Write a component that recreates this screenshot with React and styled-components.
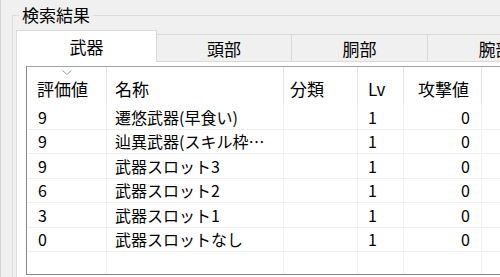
import React from "react";
import styled, { createGlobalStyle } from "styled-components";

const GlobalStyle = createGlobalStyle`
  html, body {
    margin: 0;
    padding: 0;
    background: #f0f0f0;
    overflow: hidden;
  }
  body {
    font-family: "Noto Sans CJK JP", "Noto Sans", sans-serif;
    font-size: 17px;
    color: #000;
  }
`;

const Window = styled.div`
  width: 500px;
  height: 277px;
  box-sizing: border-box;
  overflow: hidden;
  border-left: 1px solid #d2d2d2;
  padding: 4px 0 0 11px;
  background: #f0f0f0;
`;

const GroupBox = styled.fieldset`
  margin: 0;
  padding: 4px 0 0 3px;
  min-width: 0;
  width: 620px;
  border: 1px solid #dcdcdc;
`;

const GroupTitle = styled.legend`
  margin-left: 3px;
  padding: 0 3px;
  line-height: 22px;
  font-size: 17px;
`;

const TabStrip = styled.div`
  display: flex;
  align-items: flex-end;
  height: 31px;
`;

const Tab = styled.div`
  flex: none;
  display: flex;
  align-items: center;
  justify-content: center;
  box-sizing: border-box;
  width: ${p => p.$width}px;
  height: ${p => (p.$active ? 32 : 27)}px;
  border: 1px solid #d9d9d9;
  border-left: ${p => (p.$first ? "1px solid #d9d9d9" : "none")};
  border-bottom: none;
  background: ${p => (p.$active ? "#ffffff" : "#f0f0f0")};
  margin-bottom: ${p => (p.$active ? -1 : 0)}px;
  position: relative;
  z-index: ${p => (p.$active ? 1 : 0)};
  padding-top: ${p => (p.$active ? 0 : 1)}px;
  white-space: nowrap;
  overflow: hidden;
`;

const Panel = styled.div`
  border-top: 1px solid #d9d9d9;
  border-left: 1px solid #d9d9d9;
  background: #ffffff;
  padding: 4px 0 0 9px;
  height: 240px;
`;

const ListView = styled.div`
  display: flex;
  flex-direction: column;
  box-sizing: border-box;
  width: 600px;
  height: 209px;
  border: 1px solid #828790;
  border-top-color: #a0a4ab;
  background: #fff;
`;

const COLS = "80px 177px 74px 46px 78px 1fr";

const HeaderRow = styled.div`
  display: grid;
  grid-template-columns: ${COLS};
  height: 38px;
  flex: none;
`;

const HeaderCell = styled.div`
  position: relative;
  display: flex;
  align-items: center;
  justify-content: ${p => (p.$right ? "flex-end" : "flex-start")};
  padding: ${p => p.$pad};
  padding-top: 4px;
  border-right: 1px solid #e5e5e5;
  white-space: nowrap;
`;

const SortMark = styled.svg`
  position: absolute;
  top: 3px;
  left: 50%;
  margin-left: -5px;
`;

const Row = styled.div`
  display: grid;
  grid-template-columns: ${COLS};
  height: 24.5px;
  flex: none;
  border-bottom: 1px solid #f0f0f0;
  box-sizing: border-box;
`;

const Cell = styled.div`
  display: flex;
  align-items: center;
  justify-content: ${p => (p.$right ? "flex-end" : "flex-start")};
  padding: ${p => p.$pad};
  border-right: 1px solid #f0f0f0;
  white-space: nowrap;
  overflow: hidden;
  font-size: 16px;
`;

const Filler = styled.div`
  display: grid;
  grid-template-columns: ${COLS};
  flex: 1;
`;

const FillerCell = styled.div`
  border-right: 1px solid #f0f0f0;
`;

const columns = [
  { title: "評価値", pad: "0 0 0 10px", rowPad: "0 0 0 11px" },
  { title: "名称", pad: "0 0 0 8px", rowPad: "0 0 0 8px" },
  { title: "分類", pad: "0 0 0 6px", rowPad: "0 0 0 6px" },
  { title: "Lv", pad: "0 0 0 10px", rowPad: "0 0 0 10px" },
  { title: "攻撃値", pad: "0 12px 0 0", rowPad: "0 11px 0 0", right: true },
];

const rows = [
  ["9", "遷悠武器(早食い)", "", "1", "0"],
  ["9", "辿異武器(スキル枠…", "", "1", "0"],
  ["9", "武器スロット3", "", "1", "0"],
  ["6", "武器スロット2", "", "1", "0"],
  ["3", "武器スロット1", "", "1", "0"],
  ["0", "武器スロットなし", "", "1", "0"],
];

const tabs = [
  { label: "武器", width: 141, active: true },
  { label: "頭部", width: 135 },
  { label: "胴部", width: 136 },
  { label: "腕部", width: 136 },
];

export default function App() {
  return (
    <Window>
      <GlobalStyle />
      <GroupBox>
        <GroupTitle>検索結果</GroupTitle>
        <TabStrip>
          {tabs.map((t, i) => (
            <Tab key={t.label} $width={t.width} $active={t.active} $first={i === 0}>
              {t.label}
            </Tab>
          ))}
        </TabStrip>
        <Panel>
          <ListView>
            <HeaderRow>
              {columns.map((c, i) => (
                <HeaderCell key={c.title} $pad={c.pad} $right={c.right}>
                  {i === 0 && (
                    <SortMark width="10" height="5" viewBox="0 0 10 5">
                      <polyline points="0.5,0.5 5,4.5 9.5,0.5" fill="none" stroke="#9aa0a8" strokeWidth="1" />
                    </SortMark>
                  )}
                  {c.title}
                </HeaderCell>
              ))}
              <HeaderCell $pad="0" />
            </HeaderRow>
            {rows.map((r, ri) => (
              <Row key={ri}>
                {r.map((v, ci) => (
                  <Cell key={ci} $pad={columns[ci].rowPad} $right={columns[ci].right}>
                    {v}
                  </Cell>
                ))}
                <Cell $pad="0" />
              </Row>
            ))}
            <Filler>
              {columns.map(c => (
                <FillerCell key={c.title} />
              ))}
              <FillerCell />
            </Filler>
          </ListView>
        </Panel>
      </GroupBox>
    </Window>
  );
}
